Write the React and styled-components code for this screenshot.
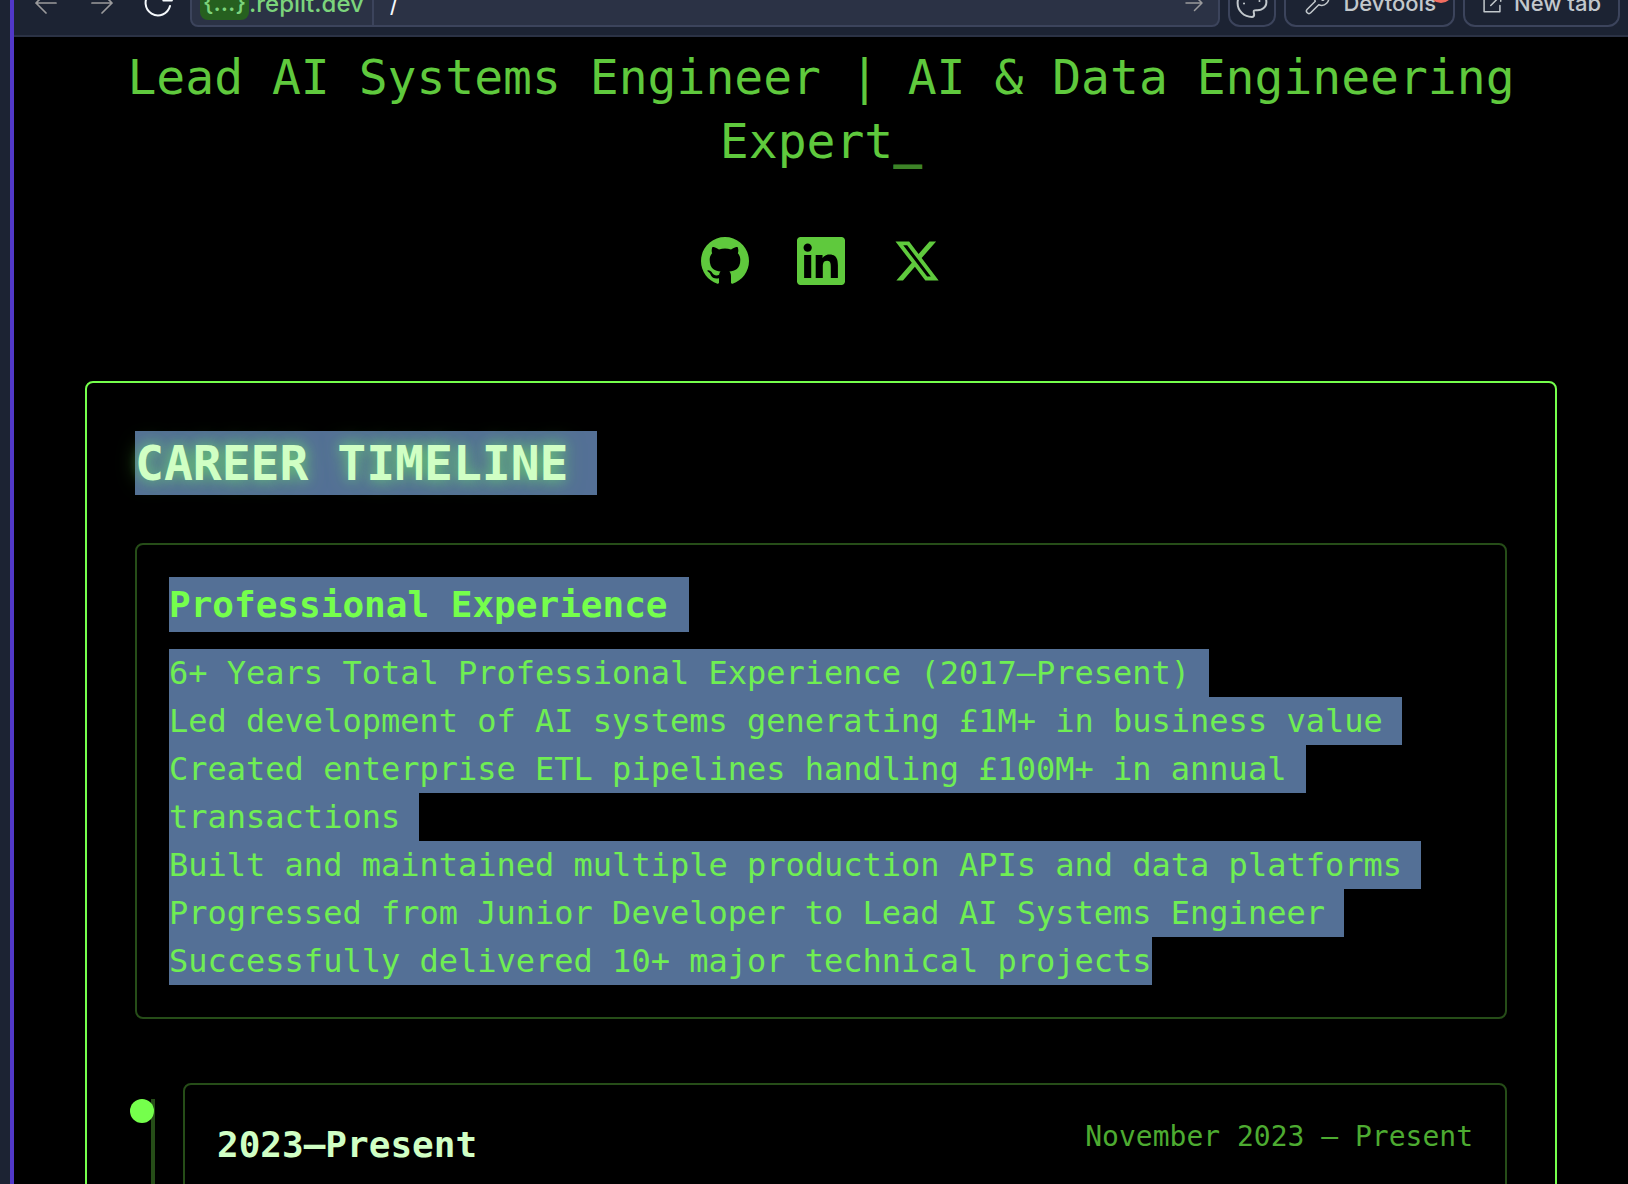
import React from "react";
import styled, { createGlobalStyle } from "styled-components";

const mono = `"DejaVu Sans Mono", "Liberation Mono", monospace`;
const sans = `Inter, "Liberation Sans", sans-serif`;

const Global = createGlobalStyle`
  *, *::before, *::after { box-sizing: border-box; }
  html, body, #root { height: 100%; }
  body { margin: 0; background: #000; font-family: ${mono}; overflow: hidden; }
  h1, h2, h3, p, ul { margin: 0; padding: 0; }
`;

const Workspace = styled.div`
  display: flex;
  height: 100vh;
  overflow: hidden;
  background: #1c2333;
`;

const Gutter = styled.div`
  flex: none;
  width: 14px;
  border-right: 4px solid #5138c9;
`;

const Pane = styled.div`
  flex: 1;
  min-width: 0;
  display: flex;
  flex-direction: column;
  background: #000;
`;

const Toolbar = styled.header`
  flex: none;
  height: 37px;
  overflow: hidden;
  display: flex;
  align-items: flex-end;
  gap: 8px;
  padding: 0 8px 8px;
  background: #1c2333;
  border-bottom: 2px solid #2b3245;
  font-family: ${sans};
  font-size: 24px;
`;

const NavButton = styled.button`
  flex: none;
  width: 48px;
  height: 48px;
  padding: 0;
  border: 0;
  background: none;
  color: ${(p) => (p.$active ? "#f5f9fc" : "#9a9a9c")};
  display: grid;
  place-items: center;
`;

const Address = styled.div`
  flex: 1;
  min-width: 0;
  height: 48px;
  display: flex;
  align-items: center;
  background: #2b3245;
  border: 2px solid #3c445c;
  border-radius: 8px;
`;

const Domain = styled.button`
  height: 100%;
  display: flex;
  align-items: center;
  padding: 0 8px;
  border: 0;
  border-right: 2px solid #3c445c;
  background: none;
  color: #7cd47c;
  font: inherit;
  font-weight: 500;
`;

const Subdomain = styled.span`
  padding: 0 3px;
  line-height: 34px;
  border-radius: 8px;
  background: #26601f;
`;

const PathInput = styled.input`
  flex: 1;
  min-width: 0;
  height: 100%;
  padding: 0 16px;
  border: 0;
  outline: 0;
  background: none;
  color: #f5f9fc;
  font: inherit;
`;

const ToolButton = styled.button`
  position: relative;
  flex: none;
  height: 48px;
  display: flex;
  align-items: center;
  gap: 12px;
  padding: 0 ${(p) => (p.$square ? 6 : 17)}px;
  border: 2px solid #3c445c;
  border-radius: 12px;
  background: none;
  color: #c2c8cc;
  font: inherit;
  font-size: 22px;
  font-weight: 500;
`;

const Alert = styled.i`
  position: absolute;
  top: -2px;
  right: 0;
  width: 24px;
  height: 24px;
  border-radius: 50%;
  background: #f26d60;
`;

const Page = styled.main`
  flex: 1;
  min-height: 0;
  overflow: hidden;
`;

const Container = styled.div`
  max-width: 1536px;
  margin: 0 auto;
  padding: 8px 32px 0;
`;

const Intro = styled.section`
  display: flex;
  flex-direction: column;
  gap: 64px;
  margin-bottom: 96px;
  text-align: center;
  color: #5fc93d;
`;

const Role = styled.p`
  font-size: 48px;
  line-height: 64px;
`;

const Cursor = styled.span`
  font-weight: bold;
  opacity: 0.65;
`;

const Socials = styled.nav`
  display: flex;
  justify-content: center;
  gap: 48px;
`;

const SocialLink = styled.a`
  display: block;
  width: 48px;
  height: 48px;
  color: inherit;
  svg { display: block; width: 100%; height: 100%; }
`;

const Terminal = styled.section`
  padding: 48px;
  border: 2px solid #75ff4c;
  border-radius: 8px;
`;

const Highlight = styled.span`
  padding: ${(p) => p.$block}px ${(p) => (p.$last ? "0" : "1ch")} ${(p) => p.$block}px 0;
  background: #547096;
  box-decoration-break: clone;
  -webkit-box-decoration-break: clone;
`;

const Title = styled.h1`
  margin-bottom: 48px;
  font-size: 48px;
  line-height: 64px;
  color: #d0ffc4;
  text-shadow: 0 0 20px rgba(117, 255, 76, 0.5), 0 0 12px rgba(124, 255, 140, 0.4);
`;

const Card = styled.article`
  flex: 1;
  padding: 32px;
  border: 2px solid #264d18;
  border-radius: 8px;
`;

const Subtitle = styled.h2`
  font-size: 36px;
  line-height: 56px;
  color: ${(p) => (p.$pale ? "#d0ffc4" : "#75ff4c")};
`;

const Facts = styled.ul`
  margin-top: 16px;
  list-style: none;
  font-size: 32px;
  line-height: 48px;
  color: #6fee53;
`;

const Entry = styled.div`
  display: flex;
  margin-top: 64px;
`;

const Rail = styled.div`
  position: relative;
  flex: none;
  width: 20px;
  margin: 16px 28px 0 0;
  border-right: 4px solid #264d18;
`;

const Dot = styled.span`
  position: absolute;
  top: 0;
  left: -5px;
  width: 24px;
  height: 24px;
  border-radius: 50%;
  background: #75ff4c;
`;

const EntryHead = styled.div`
  display: flex;
  justify-content: space-between;
  align-items: flex-start;
  min-height: 200px;
`;

const Period = styled.time`
  font-size: 28px;
  line-height: 40px;
  color: #4dab31;
`;

const Line = ({ size, d, w = 2 }) => (
  <svg
    width={size}
    height={size}
    viewBox="0 0 24 24"
    fill="none"
    stroke="currentColor"
    strokeWidth={w}
    strokeLinecap="round"
    strokeLinejoin="round"
    aria-hidden="true"
  >
    <path d={d} />
  </svg>
);

const Glyph = ({ d }) => (
  <svg viewBox="0 0 24 24" fill="currentColor" aria-hidden="true">
    <path d={d} />
  </svg>
);

const icons = {
  back: "M19.5 12h-15M12 4.5 4.5 12l7.5 7.5",
  forward: "M4.5 12h15M12 4.5l7.5 7.5-7.5 7.5",
  reload: "M21 14.3A9.3 9.3 0 1 1 20.4 8M16 10.2h6.4V3.5",
  go: "M4 12h16M12.5 4.5 20 12l-7.5 7.5",
  palette:
    "M12 1.5C6 1.5 1.2 6.2 1.2 12S6 22.5 12 22.5c1 0 1.6-.7 1.6-1.6 0-1.4-.8-2.6 0-3.2.8-.7 3 .2 5.2-.7 2.4-1 4-2.8 4-5.5 0-5.6-4.8-10-10.8-10zM6 12.4h.01M17.6 10.5h.01M8.5 7h.01M14 5.5h.01",
  wrench:
    "M14.7 6.3a1 1 0 0 0 0 1.4l1.6 1.6a1 1 0 0 0 1.4 0l3.77-3.77a6 6 0 0 1-7.94 7.94l-6.91 6.91a2.12 2.12 0 0 1-3-3l6.91-6.91a6 6 0 0 1 7.94-7.94l-3.76 3.76z",
  external: "M9 3.5H2.5V22.5h19V15M10.5 15 22 3.5M15 2.5h7.5V10",
};

const socials = [
  ["GitHub", "M12 0c-6.626 0-12 5.373-12 12 0 5.302 3.438 9.8 8.207 11.387.599.111.793-.261.793-.577v-2.234c-3.338.726-4.033-1.416-4.033-1.416-.546-1.387-1.333-1.756-1.333-1.756-1.089-.745.083-.729.083-.729 1.205.084 1.839 1.237 1.839 1.237 1.07 1.834 2.807 1.304 3.492.997.107-.775.418-1.305.762-1.604-2.665-.305-5.467-1.334-5.467-5.931 0-1.311.469-2.381 1.236-3.221-.124-.303-.535-1.524.117-3.176 0 0 1.008-.322 3.301 1.23.957-.266 1.983-.399 3.003-.404 1.02.005 2.047.138 3.006.404 2.291-1.552 3.297-1.23 3.297-1.23.653 1.653.242 2.874.118 3.176.77.84 1.235 1.911 1.235 3.221 0 4.609-2.807 5.624-5.479 5.921.43.372.823 1.102.823 2.222v3.293c0 .319.192.694.801.576 4.765-1.589 8.199-6.086 8.199-11.386 0-6.627-5.373-12-12-12z"],
  ["LinkedIn", "M20.447 20.452h-3.554v-5.569c0-1.328-.027-3.037-1.852-3.037-1.853 0-2.136 1.445-2.136 2.939v5.667H9.351V9h3.414v1.561h.046c.477-.9 1.637-1.85 3.37-1.85 3.601 0 4.267 2.37 4.267 5.455v6.286zM5.337 7.433c-1.144 0-2.063-.926-2.063-2.065 0-1.138.92-2.063 2.063-2.063 1.14 0 2.064.925 2.064 2.063 0 1.139-.925 2.065-2.064 2.065zm1.782 13.019H3.555V9h3.564v11.452zM22.225 0H1.771C.792 0 0 .774 0 1.729v20.542C0 23.227.792 24 1.771 24h20.451C23.2 24 24 23.227 24 22.271V1.729C24 .774 23.2 0 22.222 0h.003z"],
  ["X", "M18.244 2.25h3.308l-7.227 8.26 8.502 11.24H16.17l-5.214-6.817L4.99 21.75H1.68l7.73-8.835L1.254 2.25H8.08l4.713 6.231zm-1.161 17.52h1.833L7.084 4.126H5.117z"],
];

const facts = [
  "6+ Years Total Professional Experience (2017–Present)",
  "Led development of AI systems generating £1M+ in business value",
  "Created enterprise ETL pipelines handling £100M+ in annual transactions",
  "Built and maintained multiple production APIs and data platforms",
  "Progressed from Junior Developer to Lead AI Systems Engineer",
  "Successfully delivered 10+ major technical projects",
];

export default function App() {
  return (
    <Workspace>
      <Global />
      <Gutter />
      <Pane>
        <Toolbar>
          <NavButton aria-label="Back"><Line size={32} w={1.3} d={icons.back} /></NavButton>
          <NavButton aria-label="Forward"><Line size={32} w={1.3} d={icons.forward} /></NavButton>
          <NavButton $active aria-label="Reload"><Line size={32} w={1.5} d={icons.reload} /></NavButton>
          <Address>
            <Domain><Subdomain>{"{…}"}</Subdomain>.replit.dev</Domain>
            <PathInput aria-label="Path" defaultValue="/" />
            <NavButton aria-label="Go"><Line size={24} w={1.5} d={icons.go} /></NavButton>
          </Address>
          <ToolButton $square aria-label="Theme"><Line size={32} w={1.5} d={icons.palette} /></ToolButton>
          <ToolButton><Line size={28} w={1.3} d={icons.wrench} />Devtools<Alert /></ToolButton>
          <ToolButton><Line size={20} w={1.8} d={icons.external} />New tab</ToolButton>
        </Toolbar>
        <Page>
          <Container>
            <Intro>
              <Role>Lead AI Systems Engineer | AI &amp; Data Engineering Expert<Cursor>_</Cursor></Role>
              <Socials>
                {socials.map(([name, d]) => (
                  <SocialLink key={name} href="#" aria-label={name}><Glyph d={d} /></SocialLink>
                ))}
              </Socials>
            </Intro>
            <Terminal>
              <Title><Highlight $block={4}>CAREER TIMELINE</Highlight></Title>
              <Card>
                <Subtitle><Highlight $block={7}>Professional Experience</Highlight></Subtitle>
                <Facts>
                  {facts.map((fact, i) => (
                    <li key={fact}><Highlight $block={5} $last={i === facts.length - 1}>{fact}</Highlight></li>
                  ))}
                </Facts>
              </Card>
              <Entry>
                <Rail><Dot /></Rail>
                <Card>
                  <EntryHead>
                    <Subtitle $pale>2023–Present</Subtitle>
                    <Period>November 2023 – Present</Period>
                  </EntryHead>
                </Card>
              </Entry>
            </Terminal>
          </Container>
        </Page>
      </Pane>
    </Workspace>
  );
}
